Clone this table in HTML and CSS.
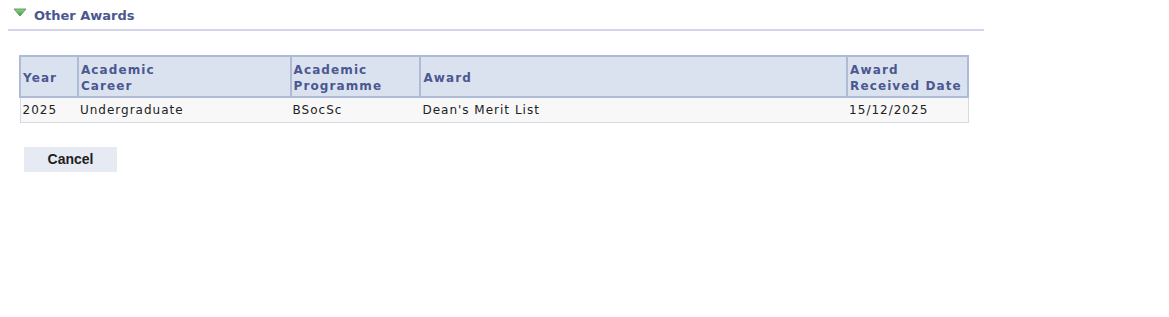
FILE: index.html
```html
<!DOCTYPE html>
<html>
<head>
  <link rel="stylesheet" href="styles.css">
</head>
<body>
  <div class="page">
    <div class="section-head">
      <svg class="toggle" width="14" height="9" viewBox="0 0 14 9">
        <defs>
          <linearGradient id="tri" x1="0" y1="0" x2="0" y2="1">
            <stop offset="0" stop-color="#8fd48a"/>
            <stop offset="1" stop-color="#3f9e3a"/>
          </linearGradient>
        </defs>
        <polygon points="1,1 13,1 7,8" fill="url(#tri)" stroke="#4a8a45" stroke-width="0.8" stroke-linejoin="round"/>
      </svg>
      <span class="section-title">Other Awards</span>
    </div>

    <table class="grid">
      <thead>
        <tr>
          <th class="col-year">Year</th>
          <th class="col-career">Academic<br>Career</th>
          <th class="col-prog">Academic<br>Programme</th>
          <th class="col-award">Award</th>
          <th class="col-date">Award<br>Received Date</th>
        </tr>
      </thead>
      <tbody>
        <tr>
          <td>2025</td>
          <td>Undergraduate</td>
          <td>BSocSc</td>
          <td>Dean's Merit List</td>
          <td>15/12/2025</td>
        </tr>
      </tbody>
    </table>

    <button class="btn">Cancel</button>
  </div>
</body>
</html>
```

FILE: styles.css
```css
* {
  box-sizing: border-box;
  margin: 0;
  padding: 0;
}

body {
  background: #fff;
  font-family: "DejaVu Sans", Verdana, sans-serif;
  color: #222;
}

.page {
  padding: 0 0 0 8px;
  width: 984px;
}

.section-head {
  display: flex;
  align-items: flex-start;
  gap: 7px;
  height: 31px;
  padding: 7px 0 0 5px;
  border-bottom: 2px solid #d4d4e8;
}

.toggle {
  margin-top: 1px;
}

.section-title {
  margin-top: 1px;
  font-size: 13px;
  line-height: 16px;
  font-weight: bold;
  color: #4b5890;
}

.grid {
  margin: 24px 0 0 11px;
  width: 950px;
  border-collapse: collapse;
  font-size: 12px;
  letter-spacing: 1px;
}

.grid th {
  background: #dbe2ef;
  border: 2px solid #aebbd6;
  color: #4b5890;
  font-size: 12px;
  font-weight: bold;
  letter-spacing: 1.1px;
  text-align: left;
  vertical-align: middle;
  line-height: 16px;
  padding: 4px 2px 2px 2px;
  height: 41px;
}

.grid td {
  background: #f8f8f8;
  border-bottom: 1px solid #d6dae4;
  padding: 4px 2px 3px 2px;
  height: 25px;
  color: #222;
}

.grid td:first-child {
  border-left: 1px solid #d6dae4;
}

.grid td:last-child {
  border-right: 1px solid #d6dae4;
}

.col-year { width: 58px; }
.col-career { width: 213px; }
.col-prog { width: 130px; }
.col-award { width: 428px; }
.col-date { width: 121px; }

.btn {
  display: block;
  margin: 24px 0 0 16px;
  width: 93px;
  height: 25px;
  background: #e6eaf3;
  border: none;
  font-family: "Liberation Sans", Arial, sans-serif;
  font-size: 14px;
  font-weight: bold;
  color: #1e1e1e;
}
```
